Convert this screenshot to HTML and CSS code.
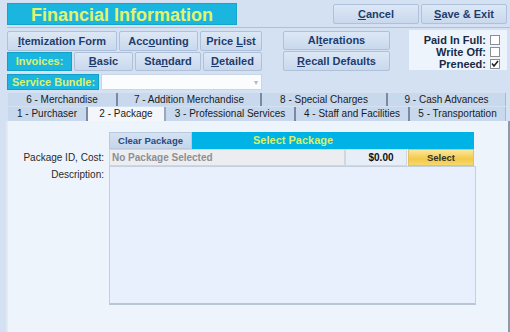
FILE: index.html
```html
<!DOCTYPE html>
<html>
<head>
<meta charset="utf-8">
<link rel="stylesheet" href="styles.css">
</head>
<body>
<div class="win">
  <header class="top">
    <h1 class="title">Financial Information</h1>
    <div class="actions">
      <button class="btn act"><u>C</u>ancel</button>
      <button class="btn act"><u>S</u>ave &amp; Exit</button>
    </div>
  </header>
  <div class="rule"></div>
  <section class="controls">
    <div class="leftcol">
      <div class="row r1">
        <button class="btn w110"><u>I</u>temization Form</button>
        <button class="btn w79">Acc<u>o</u>unting</button>
        <button class="btn w62">Price <u>L</u>ist</button>
      </div>
      <div class="row r2">
        <div class="cyan w65">Invoices:</div>
        <button class="btn w59"><u>B</u>asic</button>
        <button class="btn w66">Sta<u>n</u>dard</button>
        <button class="btn w59"><u>D</u>etailed</button>
      </div>
      <div class="row r3">
        <div class="cyan w92 sb">Service Bundle:</div>
        <div class="combo"><span class="arrow">▾</span></div>
      </div>
    </div>
    <div class="midcol">
      <button class="btn alt">Al<u>t</u>erations</button>
      <button class="btn rec"><u>R</u>ecall Defaults</button>
    </div>
    <div class="checks">
      <div class="chk"><span>Paid In Full:</span><i class="box"></i></div>
      <div class="chk"><span>Write Off:</span><i class="box"></i></div>
      <div class="chk"><span>Preneed:</span><i class="box"><svg width="8" height="8" viewBox="0 0 8 8"><polyline points="1,3.5 3,6 7,1" fill="none" stroke="#222" stroke-width="1.6"/></svg></i></div>
    </div>
  </section>
  <div class="tabs">
    <div class="tabrow">
      <div class="tab t108">6 - Merchandise</div>
      <div class="tab t142">7 - Addition Merchandise</div>
      <div class="tab t124">8 - Special Charges</div>
      <div class="tab tlast">9 - Cash Advances</div>
    </div>
    <div class="tabrow">
      <div class="tab t79">1 - Purchaser</div>
      <div class="tab sel t77">2 - Package</div>
      <div class="tab t128">3 - Professional Services</div>
      <div class="tab t112">4 - Staff and Facilities</div>
      <div class="tab tlast">5 - Transportation</div>
    </div>
  </div>
  <div class="panel">
    <div class="grid">
      <div></div>
      <div class="hdr">
        <button class="clear">Clear Package</button>
        <div class="selhead">Select Package</div>
      </div>
      <div class="lbl">Package ID, Cost:</div>
      <div class="costrow">
        <div class="field">No Package Selected</div>
        <div class="cost">$0.00</div>
        <button class="select">Select</button>
      </div>
      <div class="lbl lbltop">Description:</div>
      <div class="desc"></div>
    </div>
  </div>
</div>
</body>
</html>
```
FILE: styles.css
```css
* { box-sizing: border-box; }
html, body { margin: 0; padding: 0; }
body {
  width: 510px;
  height: 332px;
  overflow: hidden;
  background: #d4e1f3;
  font-family: "Liberation Sans", Arial, sans-serif;
}
u { text-decoration: underline; text-underline-offset: 1px; }
.win { display: flex; flex-direction: column; width: 510px; height: 332px; }

.top {
  display: flex;
  justify-content: space-between;
  padding: 3px 3px 0 7px;
  height: 25px;
}
.title {
  margin: 0;
  width: 230px;
  height: 22px;
  background: #1ab6e0;
  color: #e3f46c;
  font-size: 18px;
  font-weight: bold;
  line-height: 22px;
  text-align: center;
  border: 1px solid #15a4cc;
}
.actions { display: flex; gap: 2px; padding-top: 1px; }
.btn {
  font-family: "Liberation Sans", Arial, sans-serif;
  font-size: 11px;
  font-weight: bold;
  color: #1e3d6e;
  background: linear-gradient(#dde8f6, #c9d8ed);
  border: 1px solid #aec1da;
  border-radius: 2px;
  padding: 0;
  height: 20px;
  line-height: 18px;
  text-align: center;
}
.act { width: 86px; }
.rule {
  margin: 2px 0 0 7px;
  height: 1px;
  background: #aebfd6;
}
.controls {
  display: flex;
  margin-top: 2px;
  height: 60px;
}
.leftcol {
  margin-left: 7px;
  width: 255px;
  padding-top: 1px;
  display: flex;
  flex-direction: column;
}
.row { display: flex; gap: 2px; }
.r1 .btn { height: 20px; }
.r2 { margin-top: 1px; }
.r2 .btn, .r2 .cyan { height: 19px; line-height: 17px; }
.r3 { margin-top: 3px; }
.w110 { width: 110px; }
.w79 { width: 79px; }
.w62 { width: 62px; }
.w65 { width: 65px; }
.w59 { width: 59px; }
.w66 { width: 66px; }
.w92 { width: 92px; }
.cyan {
  background: #1ab6e0;
  color: #dcf16e;
  font-size: 11px;
  font-weight: bold;
  text-align: center;
  border: 1px solid #13a0c8;
}
.sb { height: 16px; line-height: 14px; text-align: left; padding-left: 4px; }
.combo {
  width: 161px;
  height: 16px;
  background: #fbfcfe;
  border: 1px solid #cad6e6;
  display: flex;
  justify-content: flex-end;
  align-items: center;
  padding-right: 3px;
}
.arrow { color: #b0b8c4; font-size: 8px; }
.midcol {
  margin-left: 21px;
  width: 107px;
  padding-top: 1px;
  display: flex;
  flex-direction: column;
  gap: 1px;
}
.midcol .btn { width: 107px; }
.alt { height: 19px; line-height: 17px; }
.rec { height: 20px; }
.checks {
  margin-left: 19px;
  width: 98px;
  height: 40px;
  background: #eef4fb;
  padding: 4px 7px 0 0;
  display: flex;
  flex-direction: column;
  align-items: flex-end;
}
.chk {
  display: flex;
  align-items: center;
  gap: 4px;
  height: 12.5px;
  font-size: 11px;
  font-weight: bold;
  color: #1a2a44;
}
.box {
  width: 10px;
  height: 10px;
  background: #fff;
  border: 1px solid #8a8f96;
  display: flex;
  align-items: center;
  justify-content: center;
}
.tabs {
  margin: 3px 4px 0 8px;
  display: flex;
  flex-direction: column;
  gap: 1px;
}
.tabrow { display: flex; height: 13px; }
.tabrow + .tabrow { height: 14px; }
.tab {
  background: #c8d8ed;
  color: #1b1b1b;
  font-size: 10px;
  text-align: center;
  line-height: 14px;
  border-right: 2px solid #7a8aa0;
  white-space: nowrap;
}
.tab.sel { background: #f3f7fc; border-right-color: #9aa8ba; }
.tlast { flex: 1; border-right: 1px solid #aab8c8; }
.t108 { width: 110px; }
.t142 { width: 144px; }
.t124 { width: 126px; }
.t79 { width: 80px; }
.t77 { width: 78px; }
.t128 { width: 130px; }
.t112 { width: 114px; }

.panel {
  margin-left: 6px;
  flex: 1;
  background: #eef4fc;
  border-left: 2px solid #e2eaf5;
  border-right: 2px solid #8e9aaa;
  padding-top: 11px;
}
.grid {
  display: grid;
  grid-template-columns: 96px 367px;
  column-gap: 5px;
  grid-template-rows: 17px 17px 139px;
}
.hdr { display: flex; width: 365px; }
.clear {
  width: 83px;
  height: 17px;
  padding: 0;
  border: 1px solid #b9c9de;
  background: linear-gradient(#d5e2f3, #c5d5eb);
  color: #284a7e;
  font-family: "Liberation Sans", Arial, sans-serif;
  font-size: 9.5px;
  font-weight: bold;
  white-space: nowrap;
}
.selhead {
  flex: 1;
  background: #00b3e6;
  color: #d9f16a;
  font-size: 11px;
  font-weight: bold;
  line-height: 17px;
  padding-left: 61px;
}
.lbl {
  font-size: 10px;
  color: #2a2a2a;
  text-align: right;
  line-height: 17px;
}
.lbltop { line-height: 18px; }
.costrow { display: flex; width: 365px; }
.field {
  width: 236px;
  background: #ecedf0;
  border: 1px solid #d0d6de;
  color: #8c8f94;
  font-size: 10px;
  font-weight: bold;
  line-height: 15px;
  padding-left: 2px;
}
.cost {
  width: 62px;
  background: #e8eef8;
  border: 1px solid #d0d8e4;
  font-size: 10px;
  font-weight: bold;
  color: #111;
  line-height: 15px;
  text-align: center;
  padding-left: 10px;
}
.select {
  margin-left: 1px;
  width: 66px;
  padding: 0;
  border: 1px solid #e3c16a;
  background: linear-gradient(#fbe69a, #f3c948 60%, #f7d86c);
  color: #333;
  font-family: "Liberation Sans", Arial, sans-serif;
  font-size: 9.5px;
  font-weight: bold;
}
.desc {
  background: #e8f0fd;
  border: 1px solid #c4d0dc;
  border-bottom: 2px solid #b8c6d6;
}
```
